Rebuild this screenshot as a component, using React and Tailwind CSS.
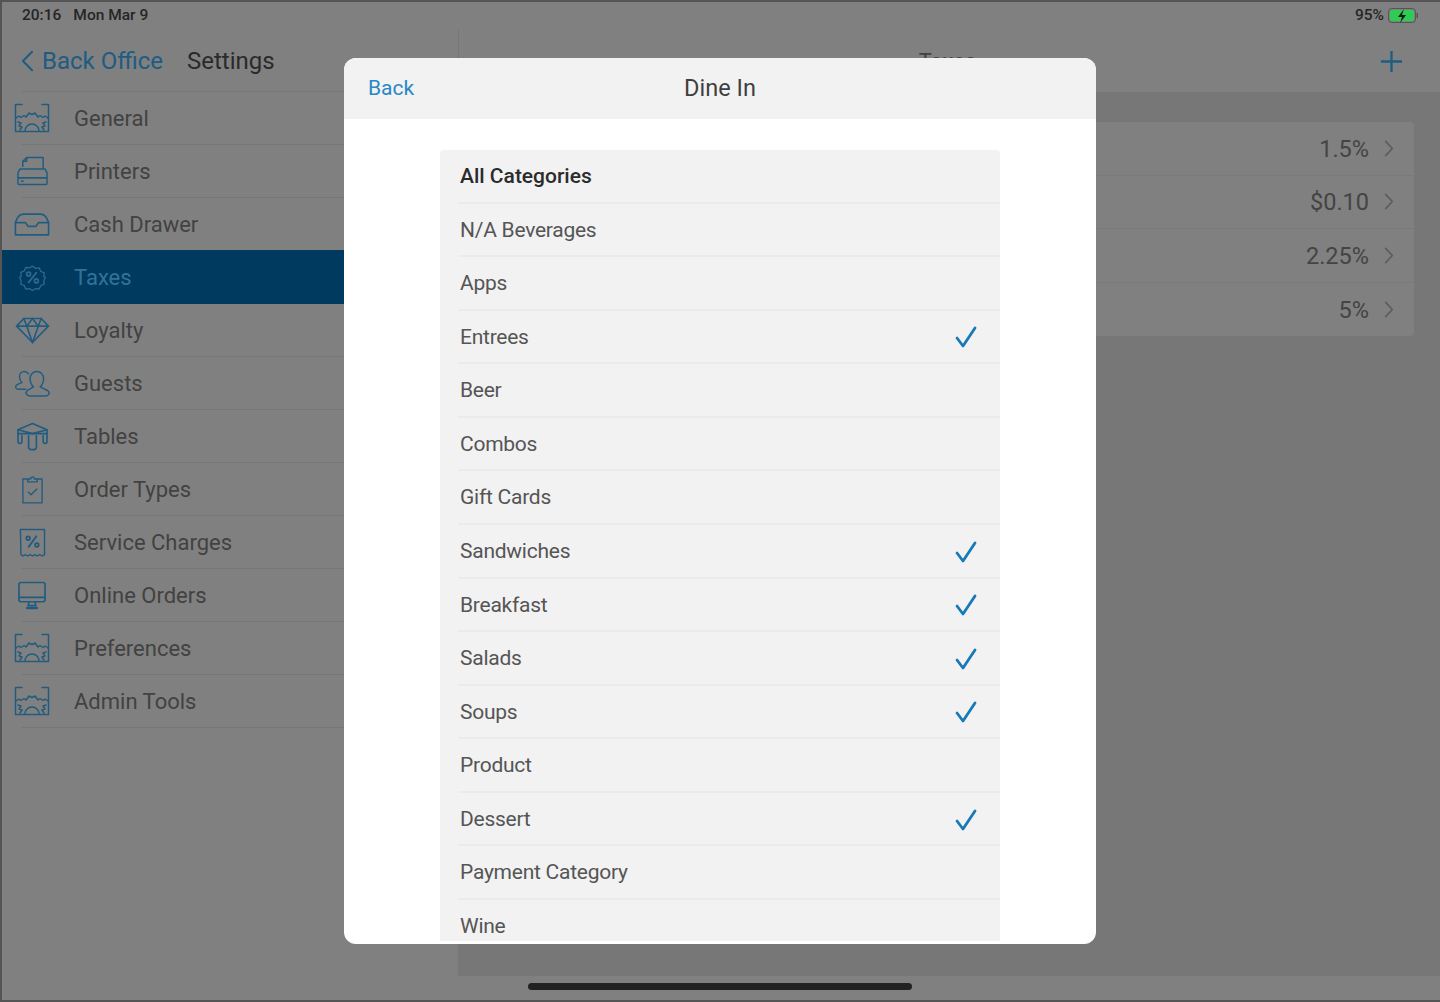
import React from "react";

const Gear = () => (
  <svg viewBox="0 0 36 30" className="w-[36px] h-[30px]" fill="none" stroke="currentColor" strokeWidth="1.500" strokeLinejoin="round" strokeLinecap="round">
    <path d="M8 1.500H1.500v27h33v-27H28" />
    <path d="M2 15l3-2 2 1.500 3-2 2 1.500 3-4 3 1.500 3-1.500 3 4 2-1.500 3 2 2-1.500 3 2" />
    <path d="M4 19l3 1-2 3 3 1-2 3" />
    <path d="M32 19l-3 1 2 3-3 1 2 3" />
    <path d="M11 28a7 7 0 0 1 14 0" />
  </svg>
);
const Printer = () => (
  <svg viewBox="0 0 34 30" className="w-[33px] h-[30px]" fill="none" stroke="currentColor" strokeWidth="1.500" strokeLinejoin="round">
    <path d="M7 11V5l4-4h17v12" />
    <path d="M11 1v4H7" />
    <path d="M4 13h26l2 4v5H2v-5z" />
    <rect x="2" y="22" width="30" height="7" rx="1" />
    <path d="M5 25.500h3" />
  </svg>
);
const Drawer = () => (
  <svg viewBox="0 0 38 26" className="w-[36px] h-[25px]" fill="none" stroke="currentColor" strokeWidth="1.700" strokeLinejoin="round" strokeLinecap="round">
    <path d="M1.500 11C3 6 6 2 10 2h18c4 0 7 4 8.500 9v13h-35z" />
    <path d="M1.500 11H12l3 4h8l3-4h10.500" />
  </svg>
);
const Badge = () => (
  <svg viewBox="0 0 30 30" className="w-[29px] h-[29px]" fill="none" stroke="currentColor" strokeWidth="1.500" strokeLinejoin="round" strokeLinecap="round">
    <path d="M15 2l3.500 2.500 4.300-.500 1.700 4 4 1.700-.500 4.300L30 15l-2 3.500.500 4-4 1.700-1.700 4-4.300-.500L15 30l-3.500-2.300-4.300.500-1.700-4-4-1.700.500-4L0 15l2-1.500-.500-4.300 4-1.700 1.700-4 4.300.500z" transform="translate(1.500 1.500) scale(.9)" />
    <path d="M11 20l8-10" strokeWidth="1.800" />
    <circle cx="11" cy="11.500" r="2" strokeWidth="1.800" />
    <circle cx="19" cy="18.500" r="2" strokeWidth="1.800" />
  </svg>
);
const Diamond = () => (
  <svg viewBox="0 0 36 28" className="w-[35px] h-[27px]" fill="none" stroke="currentColor" strokeWidth="1.700" strokeLinejoin="round" strokeLinecap="round">
    <path d="M9 1.500h18l7.500 8L18 26.500 1.500 9.500z" />
    <path d="M1.500 9.500h33M9 1.500l3 8 6 17 6-17 3-8M12 9.500l6-8 6 8" />
  </svg>
);
const Guests = () => (
  <svg viewBox="0 0 38 28" className="w-[37px] h-[27px]" fill="none" stroke="currentColor" strokeWidth="1.500" strokeLinejoin="round" strokeLinecap="round">
    <path d="M12 20H4c-2.500 0-3.300-3-1.500-4.500L8 13c-2-2-2.500-4-2.500-6C5.500 3.500 8 1.500 10.500 1.500c2 0 3.500 1 4.500 2.500" />
    <path d="M17 27h15c4 0 5.500-3.500 3-5.500L27 17.500c2-2 3.500-5 3.500-8.500C30.500 4.500 27.500 1.500 23.500 1.500S16.500 4.500 16.500 9c0 3.500 1.500 6.500 3.500 8.500L13.500 21.500C11 23.500 13 27 17 27z" />
  </svg>
);
const TableIcon = () => (
  <svg viewBox="0 0 34 30" className="w-[33px] h-[29px]" fill="none" stroke="currentColor" strokeWidth="1.700" strokeLinejoin="round" strokeLinecap="round">
    <path d="M17 1.500L32 8v4H2V8z" />
    <path d="M2 8l15 4 15-4" />
    <path d="M2 12v8c0 3 4 3 4 0v-6" />
    <path d="M32 12v8c0 3-4 3-4 0v-6" />
    <path d="M13 14v12c0 3.500 8 3.500 8 0V14" />
  </svg>
);
const Clipboard = () => (
  <svg viewBox="0 0 24 30" className="w-[23px] h-[29px]" fill="none" stroke="currentColor" strokeWidth="1.400" strokeLinejoin="round" strokeLinecap="round">
    <path d="M7 4H2v25h20V4h-5" />
    <path d="M7 7V4h3a2 2 0 0 1 4 0h3v3z" />
    <path d="M7.500 17.500l3 3 6-6" />
  </svg>
);
const Receipt = () => (
  <svg viewBox="0 0 28 30" className="w-[27px] h-[29px]" fill="none" stroke="currentColor" strokeWidth="1.500" strokeLinejoin="round" strokeLinecap="round">
    <path d="M1.500 1.500h25v26l-2.500 1.500-2.500-1.500-2.500 1.500-2.500-1.500-2.500 1.500-2.500-1.500-2.500 1.500-2.500-1.500-2.500 1.500-2-1.500z" />
    <path d="M10 19.500l8-11" strokeWidth="1.900" />
    <circle cx="9.500" cy="10.500" r="1.900" strokeWidth="1.900" />
    <circle cx="18.500" cy="17.500" r="1.900" strokeWidth="1.900" />
  </svg>
);
const Monitor = () => (
  <svg viewBox="0 0 30 30" className="w-[30px] h-[29px]" fill="none" stroke="currentColor" strokeWidth="1.700" strokeLinejoin="round" strokeLinecap="round">
    <rect x="1.500" y="1.500" width="27" height="20" rx="2" />
    <path d="M1.500 17h27" />
    <path d="M12 21.500l-1 4h8l-1-4" />
    <path d="M10 28h10" strokeWidth="2.500" />
  </svg>
);

const rows = [
  ["General", Gear],
  ["Printers", Printer],
  ["Cash Drawer", Drawer],
  ["Taxes", Badge],
  ["Loyalty", Diamond],
  ["Guests", Guests],
  ["Tables", TableIcon],
  ["Order Types", Clipboard],
  ["Service Charges", Receipt],
  ["Online Orders", Monitor],
  ["Preferences", Gear],
  ["Admin Tools", Gear],
];

const taxes = ["1.5%", "$0.10", "2.25%", "5%"];

const categories = [
  ["N/A Beverages", false],
  ["Apps", false],
  ["Entrees", true],
  ["Beer", false],
  ["Combos", false],
  ["Gift Cards", false],
  ["Sandwiches", true],
  ["Breakfast", true],
  ["Salads", true],
  ["Soups", true],
  ["Product", false],
  ["Dessert", true],
  ["Payment Category", false],
  ["Wine", false],
];

const Check = () => (
  <svg viewBox="0 0 22 22" className="w-[22px] h-[22px] text-[#1878b8]" fill="none" stroke="currentColor" strokeWidth="2.800" strokeLinecap="round" strokeLinejoin="round">
    <path d="M2 12l6 8L20 2" />
  </svg>
);

export default function App() {
  return (
    <div className="relative w-[1440px] h-[1002px] overflow-hidden flex flex-col bg-[#808080] border-t-2 border-l-2 border-b-2 border-[#555555] font-['Roboto','Liberation_Sans',sans-serif] text-[22px] text-[#424242]">
      <div className="h-[28px] shrink-0 flex items-center justify-between pl-[20px] pr-[20px] text-[15.500px] font-medium text-[#262626]">
        <div className="flex gap-[12px]">
          <span>20:16</span>
          <span>Mon Mar 9</span>
        </div>
        <div className="flex items-center gap-[4px]">
          <span>95%</span>
          <svg viewBox="0 0 32 16" className="w-[32px] h-[16px]">
            <rect x="0.500" y="0.500" width="27" height="14" rx="3.500" fill="none" stroke="#555555" />
            <rect x="2" y="2" width="24" height="11" rx="2" fill="#2ecc55" />
            <rect x="28.500" y="5" width="1.500" height="5" fill="#555555" />
            <path d="M16 1l-6 8h4l-2 6 6-8h-4z" fill="#1a1a1a" />
          </svg>
        </div>
      </div>

      <div className="flex flex-1 min-h-0">
        <div className="w-[456px] shrink-0 flex flex-col">
          <div className="h-[61px] shrink-0 flex items-center pl-[19px]">
            <svg viewBox="0 0 14 24" className="w-[13px] h-[22px] text-[#1e5c82]" fill="none" stroke="currentColor" strokeWidth="2.200" strokeLinecap="round" strokeLinejoin="round">
              <path d="M12 2L2 12l10 10" />
            </svg>
            <span className="ml-[8px] text-[#1e5c82] text-[24px]">Back Office</span>
            <span className="ml-[24px] text-[#2a2a2a] text-[24px]">Settings</span>
          </div>
          <div className="ml-[20px] h-px bg-[#767676]" />
          {rows.map(([label, Icon]) => {
            const active = label === "Taxes";
            return (
              <React.Fragment key={label}>
                <div className={active ? "h-[54px] -mt-px flex items-center bg-[#003a5f] text-[#32729a]" : "h-[52px] flex items-center"}>
                  <div className={active ? "w-[60px] shrink-0 flex justify-center text-[#2a6a92]" : "w-[60px] shrink-0 flex justify-center text-[#215c80]"}>
                    <Icon />
                  </div>
                  <span className="ml-[12px]">{label}</span>
                </div>
                {active ? null : <div className="ml-[20px] h-px bg-[#767676]" />}
              </React.Fragment>
            );
          })}
        </div>

        <div className="flex-1 flex flex-col border-l border-[#767676]">
          <div className="h-[62px] shrink-0 flex items-center justify-center relative">
            <span className="pr-[4px]">Taxes</span>
            <svg viewBox="0 0 24 24" className="absolute right-[37px] w-[23px] h-[23px] text-[#1e5c82]" fill="none" stroke="currentColor" strokeWidth="2.400">
              <path d="M12 1v22M1 12h22" />
            </svg>
          </div>
          <div className="flex-1 bg-[#777777] pt-[30px] pl-[24px] pr-[26px]">
            <div className="rounded bg-[#808080]">
              {taxes.map((t, i) => (
                <div key={t} className={i < 3 ? "h-[53.500px] flex items-center justify-end pr-[20px] border-b border-[#7a7a7a] text-[#444444] text-[23.500px]" : "h-[53.500px] flex items-center justify-end pr-[20px] text-[#444444] text-[23.500px]"}>
                  <span className="pt-[2px]">{t}</span>
                  <svg viewBox="0 0 10 18" className="ml-[15px] w-[10px] h-[17px] text-[#5c5c5c]" fill="none" stroke="currentColor" strokeWidth="1.800" strokeLinecap="round" strokeLinejoin="round">
                    <path d="M1.500 1.500L8.500 9l-7 7.500" />
                  </svg>
                </div>
              ))}
            </div>
          </div>
        </div>
      </div>

      <div className="h-[24px] shrink-0 flex justify-center items-start pt-[7px] pr-[2px]">
        <div className="w-[384px] h-[7px] rounded-full bg-[#222222]" />
      </div>

      <div className="absolute left-[342px] top-[56px] w-[752px] h-[886px] rounded-[12px] overflow-hidden bg-white flex flex-col">
        <div className="h-[61px] shrink-0 bg-[#f2f2f2] relative flex items-center justify-center">
          <span className="absolute left-[24px] top-[15px] text-[#2a87c5] text-[21px]">Back</span>
          <span className="text-[#3f3f3f] text-[23.500px]">Dine In</span>
        </div>
        <div className="flex-1 min-h-0 pt-[31px] pb-[3px] px-[96px]">
          <div className="h-full overflow-hidden rounded-t bg-[#f2f2f2]">
            <div className="h-[53.570px] border-b-2 border-[#ebebeb] ml-[18px] pl-[2px] pt-[1px] flex items-center font-medium text-[21px] text-[#2b2b2b]">All Categories</div>
            {categories.map(([name, checked]) => (
              <div key={name} className="h-[53.570px] border-b-2 border-[#ebebeb] ml-[18px] pl-[2px] pr-[23px] pt-[2px] flex items-center justify-between text-[21px] tracking-[-0.25px] text-[#555555]">
                <span>{name}</span>
                {checked ? <Check /> : null}
              </div>
            ))}
          </div>
        </div>
      </div>
    </div>
  );
}
